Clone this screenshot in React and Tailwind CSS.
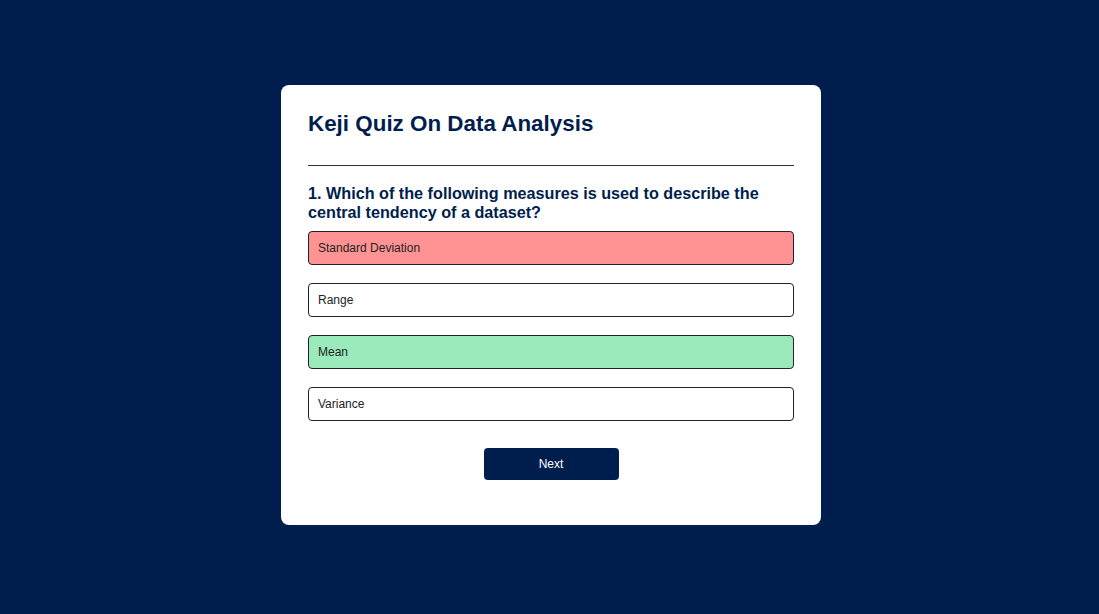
import React, { useState } from 'react';

const options = [
  { id: 1, label: 'Standard Deviation', state: 'wrong' },
  { id: 2, label: 'Range', state: '' },
  { id: 3, label: 'Mean', state: 'right' },
  { id: 4, label: 'Variance', state: '' },
];

const App = () => {
  const [index] = useState(0);

  return (
    <div className="min-h-screen w-full bg-[#001e4d] flex justify-center pt-[85px] pl-[3px] font-['Liberation_Sans',Arial,sans-serif]">
      <div className="w-[540px] h-[440px] bg-white rounded-[8px] pt-[26px] px-[27px] pb-[45px] flex flex-col">
        <h1 className="text-[22.4px] leading-[26px] font-bold text-[#001e4d]">Keji Quiz On Data Analysis</h1>
        <hr className="mt-[28px] border-0 border-t border-[#333]" />
        <h2 className="mt-[18px] text-[16.2px] leading-[18.5px] font-bold text-[#001e4d]">
          {index + 1}. Which of the following measures is used to describe the central tendency of a dataset?
        </h2>
        <ul className="mt-[10px] flex flex-col gap-[18px]">
          {options.map((opt) => (
            <li
              key={opt.id}
              className={
                'h-[34px] flex items-center px-[9px] text-[12px] text-[#222] border border-[#222] rounded-[4px] ' +
                (opt.state === 'wrong' ? 'bg-[#ff9393]' : opt.state === 'right' ? 'bg-[#9aeabc]' : 'bg-white')
              }
            >
              {opt.label}
            </li>
          ))}
        </ul>
        <button className="mt-[27px] mx-auto w-[135px] h-[32px] bg-[#001e4d] text-white text-[12px] rounded-[4px]">
          Next
        </button>
      </div>
    </div>
  );
};

export default App;
